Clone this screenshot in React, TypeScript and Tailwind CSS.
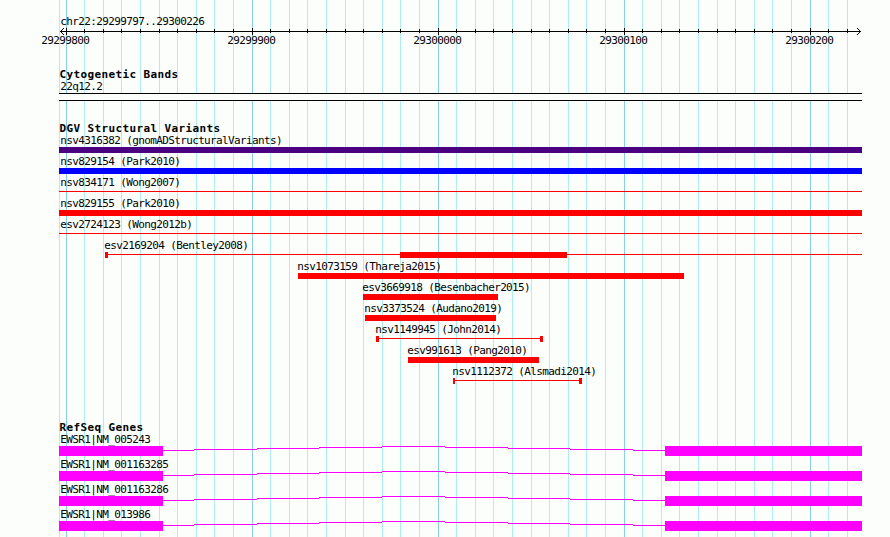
interface Feature {
  name: string;
  start: number;
  end: number;
  color: string;
  // box: solid bar, line: thin line, span: line with end caps
  shape: "box" | "line" | "span";
  caps?: [number, number];
  core?: [number, number];
}

const LEFT = 59;
const RIGHT = 862;

const TICKS = Array.from({ length: 43 }, (_, k) => ({
  x: Math.floor((660 + 186 * k) / 10),
  major: k % 10 === 0,
}));

const POSITIONS = ["29299800", "29299900", "29300000", "29300100", "29300200"];

const VARIANTS: Feature[] = [
  { name: "nsv4316382 (gnomADStructuralVariants)", start: 59, end: 862, color: "#4b0082", shape: "box" },
  { name: "nsv829154 (Park2010)", start: 59, end: 862, color: "#0000ff", shape: "box" },
  { name: "nsv834171 (Wong2007)", start: 59, end: 862, color: "#ff0000", shape: "line" },
  { name: "nsv829155 (Park2010)", start: 59, end: 862, color: "#ff0000", shape: "box" },
  { name: "esv2724123 (Wong2012b)", start: 59, end: 862, color: "#ff0000", shape: "line" },
  { name: "esv2169204 (Bentley2008)", start: 105, end: 862, color: "#ff0000", shape: "span", caps: [3, 0], core: [400, 567] },
  { name: "nsv1073159 (Thareja2015)", start: 298, end: 684, color: "#ff0000", shape: "box" },
  { name: "esv3669918 (Besenbacher2015)", start: 363, end: 498, color: "#ff0000", shape: "box" },
  { name: "nsv3373524 (Audano2019)", start: 365, end: 496, color: "#ff0000", shape: "box" },
  { name: "nsv1149945 (John2014)", start: 376, end: 543, color: "#ff0000", shape: "span", caps: [3, 3] },
  { name: "esv991613 (Pang2010)", start: 408, end: 539, color: "#ff0000", shape: "box" },
  { name: "nsv1112372 (Alsmadi2014)", start: 453, end: 582, color: "#ff0000", shape: "span", caps: [2, 3] },
];

const GENES = ["EWSR1|NM_005243", "EWSR1|NM_001163285", "EWSR1|NM_001163286", "EWSR1|NM_013986"];

// intron steps: x1, x2, y inside the gene glyph
const INTRON = [
  [163, 194, 4],
  [194, 257, 3],
  [257, 319, 2],
  [319, 382, 1],
  [382, 445, 0],
  [445, 508, 1],
  [508, 570, 2],
  [570, 633, 3],
  [633, 665, 4],
];

function Grid() {
  return (
    <svg className="absolute inset-0" width="890" height="537" shapeRendering="crispEdges">
      <rect x={LEFT} y="0" width="1" height="537" fill="#afeeee" />
      {TICKS.map((t) => (
        <rect key={t.x} x={t.x} y="0" width="1" height="537" fill={t.major ? "#87ceeb" : "#afeeee"} />
      ))}
    </svg>
  );
}

function Label({ text, x }: { text: string; x: number }) {
  return (
    <div
      className="relative z-10 h-[12px] text-[11px] leading-[12px] tracking-[-0.63px] whitespace-pre"
      style={{ paddingLeft: x }}
    >
      {text}
    </div>
  );
}

function Heading({ text }: { text: string }) {
  return (
    <h2 className="h-[13px] pl-[59.4px] text-[11px] leading-[14px] font-bold tracking-[0.378px] whitespace-pre">{text}</h2>
  );
}

function Ruler() {
  return (
    <header className="h-[33px]">
      <Label text="chr22:29299797..29300226" x={60.3} />
      <svg className="-mt-px block" width="890" height="8" shapeRendering="crispEdges">
        <rect x="60" y="4" width="801" height="1" />
        {TICKS.map((t) => (
          <rect key={t.x} x={t.x} y={t.major ? 1 : 2} width="1" height={t.major ? 7 : 4} />
        ))}
        <path d="M61 3h1v1h-1zM62 2h1v1h-1zM63 1h1v1h-1zM61 5h1v1h-1zM62 6h1v1h-1zM63 7h1v1h-1z" />
        <path d="M859 3h1v1h-1zM858 2h1v1h-1zM857 1h1v1h-1zM859 5h1v1h-1zM858 6h1v1h-1zM857 7h1v1h-1z" />
      </svg>
      <div className="flex h-[12px] gap-[138px] pl-[41.3px] text-[11px] leading-[12px] tracking-[-0.63px]">
        {POSITIONS.map((p) => (
          <span key={p} className="w-[48px] shrink-0 whitespace-nowrap">{p}</span>
        ))}
      </div>
    </header>
  );
}

function Glyph({ f }: { f: Feature }) {
  const [a, b] = f.caps ?? [0, 0];
  return (
    <svg className="block" width="890" height="6" fill={f.color} shapeRendering="crispEdges">
      {f.shape === "box" ? (
        <rect x={f.start} y="0" width={f.end - f.start} height="6" />
      ) : (
        <rect x={f.start} y="2" width={f.end - f.start} height="1" />
      )}
      {a > 0 && <rect x={f.start} y="0" width={a} height="6" />}
      {b > 0 && <rect x={f.end - b} y="0" width={b} height="6" />}
      {f.core && <rect x={f.core[0]} y="0" width={f.core[1] - f.core[0]} height="6" />}
    </svg>
  );
}

function Gene({ name }: { name: string }) {
  return (
    <div className="h-[25px]">
      <Label text={name} x={60.3} />
      <svg className="block" width="890" height="10" fill="#ff00ff" shapeRendering="crispEdges">
        <rect x={LEFT} y="0" width="104" height="10" />
        {INTRON.map(([x1, x2, y]) => (
          <rect key={x1} x={x1} y={y} width={x2 - x1} height="1" />
        ))}
        <rect x="665" y="0" width={RIGHT - 665} height="10" />
      </svg>
    </div>
  );
}

export default function App() {
  return (
    <main className="relative h-[537px] w-[890px] overflow-hidden bg-[#fcfefc] font-['DejaVu_Sans_Mono',monospace] text-black">
      <Grid />
      <div className="relative pt-[16px]">
        <Ruler />

        <section className="pt-[19px]">
          <Heading text="Cytogenetic Bands" />
          <Label text="22q12.2" x={60.3} />
          <div className="ml-[59px] h-[8px] w-[803px] border-y border-black bg-[#fcfefc]" />
        </section>

        <section className="pt-[21px]">
          <Heading text="DGV Structural Variants" />
          {VARIANTS.map((f) => (
            <div key={f.name} className="h-[21px]">
              <Label text={f.name} x={f.start === LEFT ? 60.3 : f.start - 0.7} />
              <Glyph f={f} />
            </div>
          ))}
        </section>

        <section className="pt-[34px]">
          <Heading text="RefSeq Genes" />
          {GENES.map((g) => (
            <Gene key={g} name={g} />
          ))}
        </section>
      </div>
    </main>
  );
}
